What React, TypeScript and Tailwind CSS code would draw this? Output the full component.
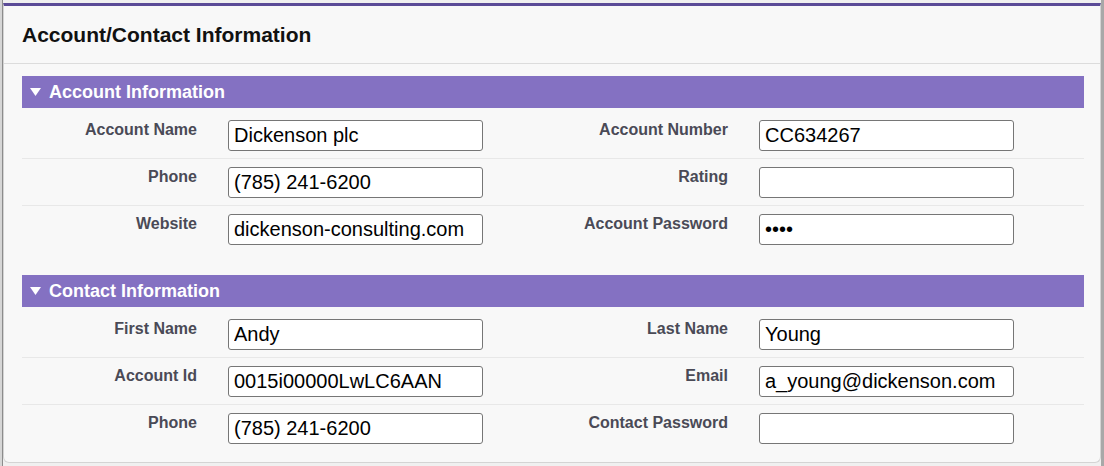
import React from 'react'

type Field = { label: string; value: string; password?: boolean }

const sections: { title: string; rows: [Field, Field][] }[] = [
  {
    title: 'Account Information',
    rows: [
      [
        { label: 'Account Name', value: 'Dickenson plc' },
        { label: 'Account Number', value: 'CC634267' },
      ],
      [
        { label: 'Phone', value: '(785) 241-6200' },
        { label: 'Rating', value: '' },
      ],
      [
        { label: 'Website', value: 'dickenson-consulting.com' },
        { label: 'Account Password', value: 'abcd', password: true },
      ],
    ],
  },
  {
    title: 'Contact Information',
    rows: [
      [
        { label: 'First Name', value: 'Andy' },
        { label: 'Last Name', value: 'Young' },
      ],
      [
        { label: 'Account Id', value: '0015i00000LwLC6AAN' },
        { label: 'Email', value: 'a_young@dickenson.com' },
      ],
      [
        { label: 'Phone', value: '(785) 241-6200' },
        { label: 'Contact Password', value: '', password: true },
      ],
    ],
  },
]

function FieldCell({ field }: { field: Field }) {
  return (
    <div className="flex w-1/2 items-start">
      <label className="w-[175px] shrink-0 text-right text-[16px] font-bold leading-[20px] text-[#4a4a56]">
        {field.label}
      </label>
      <input
        readOnly
        type={field.password ? 'password' : 'text'}
        value={field.value}
        className="ml-[31px] h-[31px] w-[255px] rounded-[3px] border border-[#767676] bg-white px-[5px] text-[20px] text-black outline-none"
      />
    </div>
  )
}

function Section({ title, rows }: { title: string; rows: [Field, Field][] }) {
  return (
    <div>
      <div className="flex h-[32px] items-center bg-[#8471c2] pl-[8px] text-white">
        <svg width="11" height="8" viewBox="0 0 11 8" className="mr-[8px]">
          <path d="M0 0 L11 0 L5.5 8 Z" fill="#fff" />
        </svg>
        <span className="text-[18px] font-bold">{title}</span>
      </div>
      <div className="pt-[4px]">
        {rows.map((pair, i) => (
          <div
            key={i}
            className={`flex py-[8px] ${i < rows.length - 1 ? 'h-[47px] border-b border-[#e8e8e8]' : 'h-[46px]'}`}
          >
            <FieldCell field={pair[0]} />
            <FieldCell field={pair[1]} />
          </div>
        ))}
      </div>
    </div>
  )
}

export default function App() {
  return (
    <div className="flex h-[466px] w-[1104px] bg-[#f0f0f0] font-['Liberation_Sans',Arial,sans-serif]">
      <div className="w-[3px] shrink-0 border-r border-[#8c8c8c] bg-[#d6d6d6]" />
      <div className="mt-[3px] flex h-[460px] flex-1 flex-col rounded-b-[6px] border-x border-b border-t-[3px] border-x-[#d4d4d4] border-b-[#d4d4d4] border-t-[#5b4b97] bg-[#f8f8f8]">
        <div className="flex h-[58px] shrink-0 items-center border-b border-[#dcdcdc] px-[18px]">
          <h1 className="text-[21px] font-bold text-[#111]">Account/Contact Information</h1>
        </div>
        <div className="flex flex-col gap-[23px] pl-[18px] pr-[16px] pt-[12px]">
          {sections.map((s) => (
            <Section key={s.title} title={s.title} rows={s.rows} />
          ))}
        </div>
      </div>
      <div className="w-[3px] shrink-0 bg-[#a8a8a8]" />
    </div>
  )
}
